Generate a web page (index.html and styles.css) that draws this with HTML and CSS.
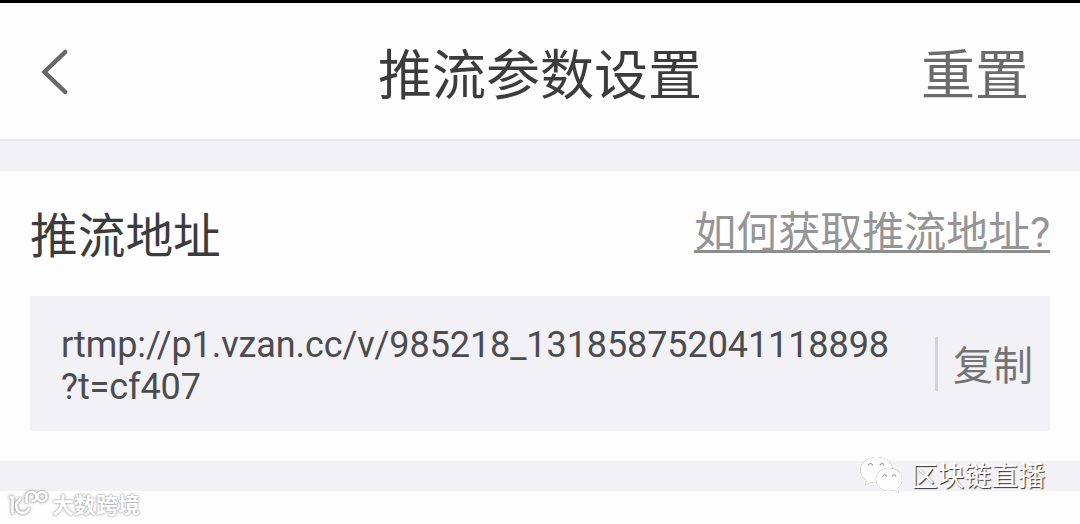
FILE: index.html
```
<!DOCTYPE html>
<html lang="zh-CN">
<head>
    <meta charset="UTF-8">
    <meta name="viewport" content="width=device-width, initial-scale=1.0">
    <title>推流参数设置</title>
    <link rel="stylesheet" href="styles.css">
</head>
<body>

    <header class="cabecera">
        <a class="volver" href="#" aria-label="返回">
            <svg width="30" height="48" viewBox="0 0 30 48">
                <path d="M25.2 4 L4.5 24 L25.2 44" />
            </svg>
        </a>
        <h1>推流参数设置</h1>
        <a class="reset" href="#">重置</a>
    </header>

    <main class="panel">
        <div class="fila">
            <h2>推流地址</h2>
            <a class="ayuda" href="#">如何获取推流地址?</a>
        </div>
        <div class="direccion">
            <p class="url">rtmp://p1.vzan.cc/v/985218_131858752041118898<br>?t=cf407</p>
            <button class="copiar" type="button">复制</button>
        </div>
    </main>

    <section class="siguiente"></section>

    <!-- marcas de agua -->
    <div class="marca marca-canal">
        <svg width="46" height="40" viewBox="0 0 46 40">
            <path class="globo" d="M17.500 2C8.500 2 1.500 7.500 1.500 15c0 4.500 2.300 8 6 10.300L6 30.500l5.800-3.200c1.800.5 3.700.7 5.700.7 9 0 16-5.500 16-13S26.500 2 17.500 2z" />
            <path class="globo" d="M30 13c-7.500 0-13 5-13 11.500S22.500 36 30 36c1.800 0 3.500-.3 5-.9l5 2.600-1.500-4.200c2.800-2.100 4.500-5.300 4.500-9C43 18 37.500 13 30 13z" />
            <path class="ojo" d="M9.500 10.500a2 2 0 0 1 4 0M21 10.500a2 2 0 0 1 4 0M24 21.500a1.700 1.700 0 0 1 3.400 0M33.500 21.500a1.700 1.700 0 0 1 3.400 0" />
        </svg>
        <span>区块链直播</span>
    </div>

    <div class="marca marca-sitio">
        <svg width="42" height="30" viewBox="0 0 42 30">
            <path d="M2.500 9 H5.500 V26 M14 10 L9 16 C9 27 19 27 22.500 20 M19.500 15 V8.500 a5 4.500 0 1 1 5 4.500" />
            <circle cx="35" cy="8.500" r="4.500" />
        </svg>
        <span>大数跨境</span>
    </div>

</body>
</html>
```

FILE: styles.css
```
body, h1, h2, p {
    margin: 0;
    padding: 0;
}

body {
    position: relative;
    height: 524px;
    overflow: hidden;
    font-family: Roboto, "Noto Sans CJK SC", sans-serif;
    background-color: #f2f1f6;
    color: #3c3c3c;
}

h1, h2 {
    font-weight: normal;
}

a {
    text-decoration: none;
}

/* Cabecera */
.cabecera {
    display: grid;
    grid-template-columns: 200px 1fr 200px;
    align-items: center;
    box-sizing: border-box;
    height: 141px;
    padding: 1px 51px 0;
    border-top: 3px solid #000;
    border-bottom: 2px solid #e9e9eb;
    background-color: #fdfdfd;
    font-family: "Noto Sans CJK SC", sans-serif;
}

.volver svg {
    display: block;
    margin-left: -11px;
}

.volver path {
    fill: none;
    stroke: #686868;
    stroke-width: 4.5;
    stroke-linecap: round;
}

h1 {
    font-size: 54px;
    line-height: 80px;
    text-align: center;
    white-space: nowrap;
}

.reset {
    color: #6b6b6b;
    font-size: 54px;
    line-height: 80px;
    text-align: right;
}

/* Panel principal */
.panel {
    box-sizing: border-box;
    height: 290px;
    margin-top: 30px;
    padding: 24px 30px 30px;
    background-color: #fdfdfd;
}

.fila {
    display: flex;
    justify-content: space-between;
    height: 101px;
    font-family: "Noto Sans CJK SC", sans-serif;
}

h2 {
    font-size: 47.7px;
    line-height: 75px;
}

.ayuda {
    color: #959595;
    font-family: Roboto, "Noto Sans CJK SC", sans-serif;
    font-size: 42px;
    line-height: 76px;
    text-decoration: underline;
    text-decoration-color: #8d8d8d;
    text-decoration-thickness: 3px;
    text-decoration-skip-ink: none;
    text-underline-offset: 3px;
}

.direccion {
    display: flex;
    align-items: center;
    justify-content: space-between;
    box-sizing: border-box;
    height: 135px;
    padding: 0 17px 0 31px;
    background-color: #f2f1f6;
}

.url {
    margin-top: 5px;
    color: #4c4c4e;
    font-size: 36px;
    letter-spacing: -0.09px;
    line-height: 42px;
}

.copiar {
    height: 54px;
    padding: 0 0 2px 15px;
    border: none;
    border-left: 3px solid #d4d3d8;
    background: none;
    color: #747476;
    font-family: "Noto Sans CJK SC", sans-serif;
    font-size: 40px;
    line-height: 52px;
}

.siguiente {
    height: 33px;
    margin-top: 30px;
    background-color: #fdfdfd;
}

/* Marcas de agua */
.marca {
    position: absolute;
    display: flex;
    align-items: center;
    color: #fff;
    font-family: "Noto Sans CJK SC", sans-serif;
    white-space: nowrap;
}

.marca svg {
    fill: none;
}

.marca-canal {
    left: 859px;
    top: 454px;
    gap: 6px;
    font-size: 26.8px;
    line-height: 42px;
    text-shadow: 1px 1px 1px #333;
}

.marca-canal .globo {
    fill: #fdfdfd;
    filter: drop-shadow(0.3px 0.8px 0.4px #666);
}

.marca-canal .ojo {
    stroke: #888;
    stroke-width: 1;
}

.marca-sitio {
    left: 7px;
    top: 484px;
    gap: 3px;
    font-size: 22px;
    font-weight: bold;
    line-height: 38px;
    text-shadow: 0 0 2px #999, 0 0 2px #aaa;
}

.marca-sitio svg {
    stroke: #fff;
    stroke-width: 2.6;
    filter: drop-shadow(0 0 1px #999) drop-shadow(0 0 1px #bbb);
}
```
